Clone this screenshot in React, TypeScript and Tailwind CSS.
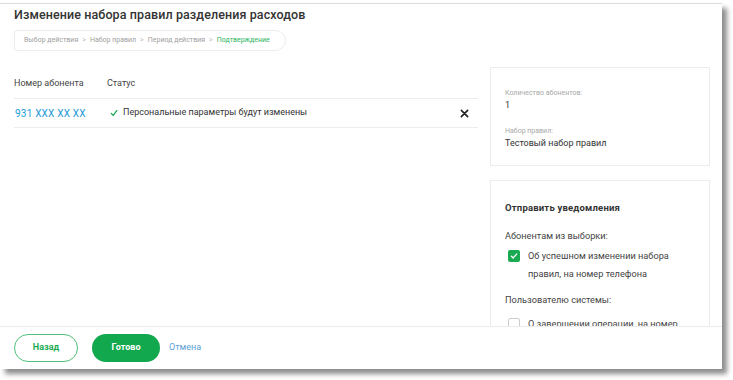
import React from "react";

const font = { fontFamily: "Roboto, 'Noto Sans', sans-serif" };

function Check() {
  return (
    <svg width="8" height="8" viewBox="0 0 10 10" className="shrink-0">
      <path d="M1.5 5.5 L4 8 L8.5 2" fill="none" stroke="#1aab52" strokeWidth="1.6" strokeLinecap="round" strokeLinejoin="round" />
    </svg>
  );
}

function Sep() {
  return <span className="mx-[4px] text-[#bbbbbb]">&gt;</span>;
}

export default function App() {
  return (
    <div className="w-[733px] h-[380px] bg-white pt-[3px] overflow-hidden" style={font}>
      <div className="w-[722px] h-[366px] bg-white border-t border-[#dcdcdc] shadow-[5px_5px_5px_rgba(0,0,0,0.45)] flex flex-col">
        {/* Header */}
        <div className="px-[14px] pt-[2px]">
          <div className="text-[12.5px] leading-[17px] font-medium text-[#333333] tracking-[0.1px]">
            Изменение набора правил разделения расходов
          </div>
          <div className="mt-[7px] h-[21px] w-[272px] border border-[#ececec] rounded-l-[4px] rounded-r-[14px] flex items-center pl-[9px] text-[7px] text-[#a0a0a0] whitespace-nowrap">
            <span>Выбор действия</span>
            <Sep />
            <span>Набор правил</span>
            <Sep />
            <span>Период действия</span>
            <Sep />
            <span className="text-[#2bb45e]">Подтверждение</span>
          </div>
        </div>

        {/* Body */}
        <div className="flex-1 flex overflow-hidden pl-[14px] pr-[12px]">
          <div className="w-[464px] pt-[25px]">
            <div className="flex items-center h-[16px] text-[9px] text-[#444444]">
              <div className="w-[93px]">Номер абонента</div>
              <div>Статус</div>
            </div>
            <div className="mt-[6px] border-t border-[#ececec]" />
            <div className="flex items-center h-[29px] border-b border-[#ececec]">
              <div className="w-[96px] pl-[1px] text-[10px] text-[#1e9ad6] tracking-[0.2px]">931 XXX XX XX</div>
              <div className="flex items-center gap-[5px] text-[9px] text-[#333333]">
                <Check />
                <span>Персональные параметры будут изменены</span>
              </div>
              <div className="ml-auto mr-[9px] text-[#222222]">
                <svg width="9" height="9" viewBox="0 0 10 10">
                  <path d="M1.5 1.5 L8.5 8.5 M8.5 1.5 L1.5 8.5" stroke="#222" strokeWidth="1.8" strokeLinecap="round" />
                </svg>
              </div>
            </div>
          </div>

          <div className="ml-[12px] w-[220px] pt-[16px] flex flex-col">
            <div className="border border-[#ececec] h-[99px] shrink-0 px-[14px] pt-[20px]">
              <div className="text-[7px] leading-[10px] text-[#a8a8a8]">Количество абонентов:</div>
              <div className="text-[9px] leading-[14px] text-[#333333]">1</div>
              <div className="mt-[14px] text-[7px] leading-[10px] text-[#a8a8a8]">Набор правил:</div>
              <div className="text-[9px] leading-[14px] text-[#333333]">Тестовый набор правил</div>
            </div>
            <div className="mt-[14px] border border-[#ececec] flex-1 px-[14px] pt-[21px] text-[9.2px] text-[#333333]">
              <div className="font-bold text-[9.5px] leading-[12px] tracking-[0.2px]">Отправить уведомления</div>
              <div className="mt-[16px] leading-[12px] text-[#444444]">Абонентам из выборки:</div>
              <div className="mt-[5px] flex pl-[3px]">
                <div className="mt-[3px] w-[12px] h-[12px] rounded-[2px] bg-[#1aab52] flex items-center justify-center shrink-0">
                  <svg width="8" height="8" viewBox="0 0 10 10">
                    <path d="M1.8 5.2 L4 7.4 L8.3 2.6" fill="none" stroke="#fff" strokeWidth="1.7" strokeLinecap="round" strokeLinejoin="round" />
                  </svg>
                </div>
                <div className="ml-[8px] leading-[18px] text-[#444444]">
                  Об успешном изменении набора
                  <br />
                  правил, на номер телефона
                </div>
              </div>
              <div className="mt-[11px] leading-[12px] text-[#444444]">Пользователю системы:</div>
              <div className="mt-[9px] flex pl-[3px]">
                <div className="mt-[3px] w-[12px] h-[12px] rounded-[2px] border border-[#cccccc] shrink-0" />
                <div className="ml-[8px] leading-[18px] text-[#444444]">
                  О завершении операции, на номер
                  <br />
                  электронной почты
                </div>
              </div>
            </div>
          </div>
        </div>

        {/* Footer */}
        <div className="h-[43px] shrink-0 border-t border-[#ececec] flex items-center px-[14px]">
          <button className="w-[64px] h-[28px] rounded-full border border-[#4fbf7a] text-[#1aab52] text-[9px] font-bold">
            Назад
          </button>
          <button className="ml-[14px] w-[68px] h-[28px] rounded-full bg-[#12a84e] text-white text-[9px] font-bold">
            Готово
          </button>
          <span className="ml-[9px] text-[9px] text-[#5a9fd8]">Отмена</span>
        </div>
      </div>
    </div>
  );
}
